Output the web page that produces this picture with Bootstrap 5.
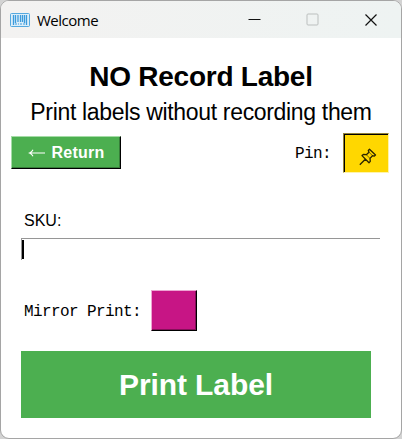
<!DOCTYPE html>
<html lang="en">
<head>
<meta charset="utf-8">
<meta name="viewport" content="width=device-width, initial-scale=1">
<title>Welcome</title>
<link href="https://cdn.jsdelivr.net/npm/bootstrap@5.3.0/dist/css/bootstrap.min.css" rel="stylesheet">
<style>
body{background:#d3d3d3;font-family:"Liberation Sans",Arial,sans-serif;color:#000;width:402px;height:439px}
.app-window{width:402px;height:439px;border:1px solid #a5a5a5;border-radius:9px;background:#fff}
.title-strip{height:37px;background:linear-gradient(90deg,#f3f2f1,#eef3f2);padding:0 23px 0 9px}
.title-text{font:15px/20px "Open Sans","Noto Sans",sans-serif;letter-spacing:-.5px;margin-left:7px}
.window-tools{gap:45px}
.page-title{font-size:28px;line-height:32px;margin-top:23px;letter-spacing:-.25px}
.page-sub{font-size:23px;line-height:28px;letter-spacing:-.33px;margin-top:5px}
.action-row{padding:7px 12px 0 10px}
.btn-return{width:110px;height:33px;border-radius:0;border:1px solid;border-color:#a4dca6 #000 #000 #a4dca6;background:#4caf50;color:#fff;font-size:16px;font-weight:700;line-height:20px;box-shadow:inset -1px -1px #367d39;letter-spacing:.2px;margin-top:-1px}
.return-text{margin-left:2px}
.mono-label{font:16px/20px "Liberation Mono",monospace;letter-spacing:-.6px;padding-top:2px}
.btn-pin{width:46px;height:40px;border-radius:0;border:1px solid;border-color:#92823a #fff4aa #fff4aa #92823a;background:#ffd700;box-shadow:inset 1px 1px #000}
.sku-area{padding:38px 21px 0 20px}
.sku-label{font-size:16px;line-height:20px;margin-left:3px}
.sku-input{height:22px;border:0;border-top:1px solid #969696;border-left:1px solid #969696;border-radius:0;margin-top:7px;padding-top:1px}
.caret{width:2px;height:19px;background:#000}
.mirror-row{padding:30px 0 0 23px}
.btn-mirror{width:46px;height:41px;border-radius:0;border:1px solid;border-color:#eda5d3 #000 #000 #eda5d3;background:#c71585;box-shadow:inset -1px -1px #850e59;margin-left:10px}
.btn-main{width:350px;height:67px;margin:20px 0 0 20px;border:0;border-radius:0;background:#4caf50;color:#fff;font-size:30px;font-weight:700;line-height:36px;letter-spacing:-.1px}
</style>
</head>
<body>
<main class="app-window d-flex flex-column overflow-hidden">
  <header class="title-strip d-flex align-items-center justify-content-between">
    <div class="d-flex align-items-center">
      <svg width="20" height="14" viewBox="0 0 20 14" aria-hidden="true"><rect x=".5" y=".5" width="19" height="13" rx="1" fill="#dceef9" stroke="#55a9df"/><path d="M3.5 2v10M5.5 2v8M8 2v7M10.5 2v7M12.5 2v7M14.5 2v8M16.5 2v10" stroke="#3c9bdc" stroke-width="1.3"/><path d="M5 11h2M8 11h1M10 11h2M13 11h2" stroke="#3c9bdc"/></svg>
      <span class="title-text">Welcome</span>
    </div>
    <div class="window-tools d-flex align-items-center">
      <svg width="13" height="13" viewBox="0 0 13 13"><path d="M.5 6.5h12" stroke="#111" stroke-width="1.1"/></svg>
      <svg width="13" height="13" viewBox="0 0 13 13"><rect x="1" y="1" width="11" height="11" rx="1" fill="none" stroke="#bbbfbe"/></svg>
      <svg width="14" height="14" viewBox="0 0 14 14"><path d="M1.5 1.5l11 11M12.5 1.5l-11 11" stroke="#111" stroke-width="1.2"/></svg>
    </div>
  </header>
  <h1 class="page-title fw-bold text-center mb-0">NO Record Label</h1>
  <p class="page-sub text-center text-nowrap mb-0">Print labels without recording them</p>
  <div class="action-row d-flex align-items-center justify-content-between">
    <button class="btn btn-return d-flex align-items-center justify-content-center p-0" type="button">
      <svg class="me-1" width="18" height="10" viewBox="0 0 18 10" aria-hidden="true"><path d="M17 5H1.5M5 1.8Q4 4 1.5 5Q4 6 5 8.2" fill="none" stroke="#fff" stroke-width="1.1"/></svg>
      <span class="return-text">Return</span>
    </button>
    <div class="d-flex align-items-center">
      <span class="mono-label me-2 pe-1">Pin:</span>
      <button class="btn btn-pin d-flex align-items-center justify-content-center p-0" type="button" aria-label="Pin">
        <svg class="mt-2 ms-1" width="18" height="18" viewBox="0 0 18 18"><path d="M10.5 1.2l6 5.8-1.4 1.2-1.6-.5-2.5 2.7.3 3-1.3 1.3L3 7.6l1.4-1.2 2.9.3L10 4.2l-.7-1.7zM6.3 11.2L.8 16.8" fill="none" stroke="#2b2500" stroke-width="1.3" stroke-linejoin="round"/><path d="M7.3 6.7l3.9 3.9M10 4.2l3.5 3.5" fill="none" stroke="#2b2500" stroke-width=".6"/></svg>
      </button>
    </div>
  </div>
  <div class="sku-area">
    <div class="sku-label">SKU:</div>
    <div class="sku-input" role="textbox"><div class="caret"></div></div>
  </div>
  <div class="mirror-row d-flex align-items-center">
    <span class="mono-label">Mirror Print:</span>
    <button class="btn btn-mirror p-0" type="button" aria-label="Mirror print"></button>
  </div>
  <button class="btn btn-main p-0" type="button">Print Label</button>
</main>
<script src="https://cdn.jsdelivr.net/npm/bootstrap@5.3.0/dist/js/bootstrap.bundle.min.js"></script>
</body>
</html>
